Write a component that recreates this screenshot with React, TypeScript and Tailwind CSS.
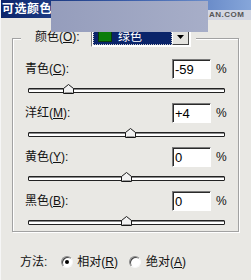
import React from 'react';

const FONT = "font-['Liberation_Sans','Noto_Sans_CJK_SC',sans-serif]";

type Row = { name: string; key: string; value: string; pos: number };

const rows: Row[] = [
  { name: '青色', key: 'C', value: '-59', pos: -59 },
  { name: '洋红', key: 'M', value: '+4', pos: 4 },
  { name: '黄色', key: 'Y', value: '0', pos: 0 },
  { name: '黑色', key: 'B', value: '0', pos: 0 },
];

function Thumb() {
  return (
    <svg width="11" height="10" viewBox="0 0 11 10">
      <polygon points="0.5,4.5 5.5,0.5 10.5,4.5 10.5,9.5 0.5,9.5" fill="#f2f2f2" stroke="#1a1a1a" />
      <line x1="1.5" y1="8.5" x2="9.5" y2="8.5" stroke="#9a9a9a" />
    </svg>
  );
}

function Slider({ pos }: { pos: number }) {
  // track spans 196px, value range -100..100
  const center = 98 + pos * 0.98;
  return (
    <div className="relative ml-[15px] mt-[9px] h-[5px] w-[197px] rounded-[1px] border border-[#222] bg-white shadow-[inset_0_1px_0_#8a8a8a]">
      <div className="absolute top-[-5px]" style={{ left: center - 6 }}>
        <Thumb />
      </div>
    </div>
  );
}

function ChannelRow({ row, last }: { row: Row; last: boolean }) {
  return (
    <div className={last ? '' : 'mb-[10px]'}>
      <div className="flex h-[20px] items-center">
        <span className="ml-[12px] w-[147px] text-[12px] leading-none text-[#111]">
          {row.name}(<u>{row.key}</u>):
        </span>
        <div className="flex h-[20px] w-[39px] items-center border border-t-[#7a7a7a] border-l-[#7a7a7a] border-r-white border-b-white bg-white shadow-[inset_1px_1px_0_#2a2a2a]">
          <span className="pl-[2px] text-[13px] leading-none text-black">{row.value}</span>
        </div>
        <span className="ml-[5px] text-[12px] leading-none text-[#111]">%</span>
      </div>
      <Slider pos={row.pos} />
    </div>
  );
}

function Radio({ checked }: { checked: boolean }) {
  return (
    <span className="flex h-[12px] w-[12px] items-center justify-center rounded-full border border-t-[#8a8a8a] border-l-[#8a8a8a] border-r-[#f8f8f8] border-b-[#f8f8f8] bg-white shadow-[inset_1px_1px_0_#444]">
      {checked && <span className="h-[4px] w-[4px] rounded-full bg-black" />}
    </span>
  );
}

export default function App() {
  return (
    <div className={`relative h-[280px] w-[251px] overflow-hidden border-l border-[#f6f6f6] bg-[#e9e8e4] ${FONT}`}>
      {/* title bar */}
      <div className="-ml-px flex h-[18px] items-center bg-gradient-to-r from-[#0a246a] via-[#3a5ca8] to-[#86a6da] pl-[2px]">
        <span className="text-[12px] font-bold leading-none tracking-[0.5px] text-white">可选颜色</span>
      </div>

      {/* group box */}
      <div className="ml-[11px] mt-[20px] w-[227px] border border-[#a2a2a2] pb-[6px] shadow-[inset_1px_1px_0_#ffffff,1px_1px_0_#ffffff]">
        <div className="-mt-[13px] ml-[8px] flex h-[21px] w-[175px] items-center bg-[#e9e8e4] pl-[14px]">
          <span className="w-[56px] text-[12px] leading-none text-[#111]">
            颜色(<u>O</u>):
          </span>
          <div className="flex h-[21px] w-[100px] items-center border border-t-[#7a7a7a] border-l-[#7a7a7a] border-r-white border-b-white bg-white p-[1px]">
            <div className="flex h-full flex-1 items-center border border-dotted border-[#c9c9c9] bg-[#0a246a]">
              <span className="ml-[4px] h-[11px] w-[14px] border border-[#0a3a0a] bg-[#0b7d0b]" />
              <span className="ml-[6px] text-[12px] leading-none text-white">绿色</span>
            </div>
            <div className="flex h-full w-[17px] items-center justify-center border border-t-white border-l-white border-r-[#444] border-b-[#444] bg-[#e4e3df]">
              <svg width="7" height="4" viewBox="0 0 7 4">
                <polygon points="0,0 7,0 3.5,4" fill="#000" />
              </svg>
            </div>
          </div>
        </div>

        <div className="mt-[12px]">
          {rows.map((row, i) => (
            <ChannelRow key={row.key} row={row} last={i === rows.length - 1} />
          ))}
        </div>
      </div>

      {/* method */}
      <div className="ml-[19px] mt-[22px] flex h-[16px] items-center text-[12px] leading-none text-[#111]">
        <span>方法:</span>
        <span className="ml-[14px]">
          <Radio checked />
        </span>
        <span className="ml-[4px]">
          相对(<u>R</u>)
        </span>
        <span className="ml-[11px]">
          <Radio checked={false} />
        </span>
        <span className="ml-[5px]">
          绝对(<u>A</u>)
        </span>
      </div>

      {/* watermark overlays */}
      <div className="absolute left-[50px] top-[1px] h-[31px] w-[157px] bg-gradient-to-r from-[#959dbc] to-[#a7aec8]" />
      <div className="absolute left-[207px] top-[10px] flex h-[10px] w-[44px] items-center bg-[#d3d7e3] pl-[1px]">
        <span className="text-[8px] font-bold leading-none tracking-[0.5px] text-[#555]">AN.COM</span>
      </div>
    </div>
  );
}
